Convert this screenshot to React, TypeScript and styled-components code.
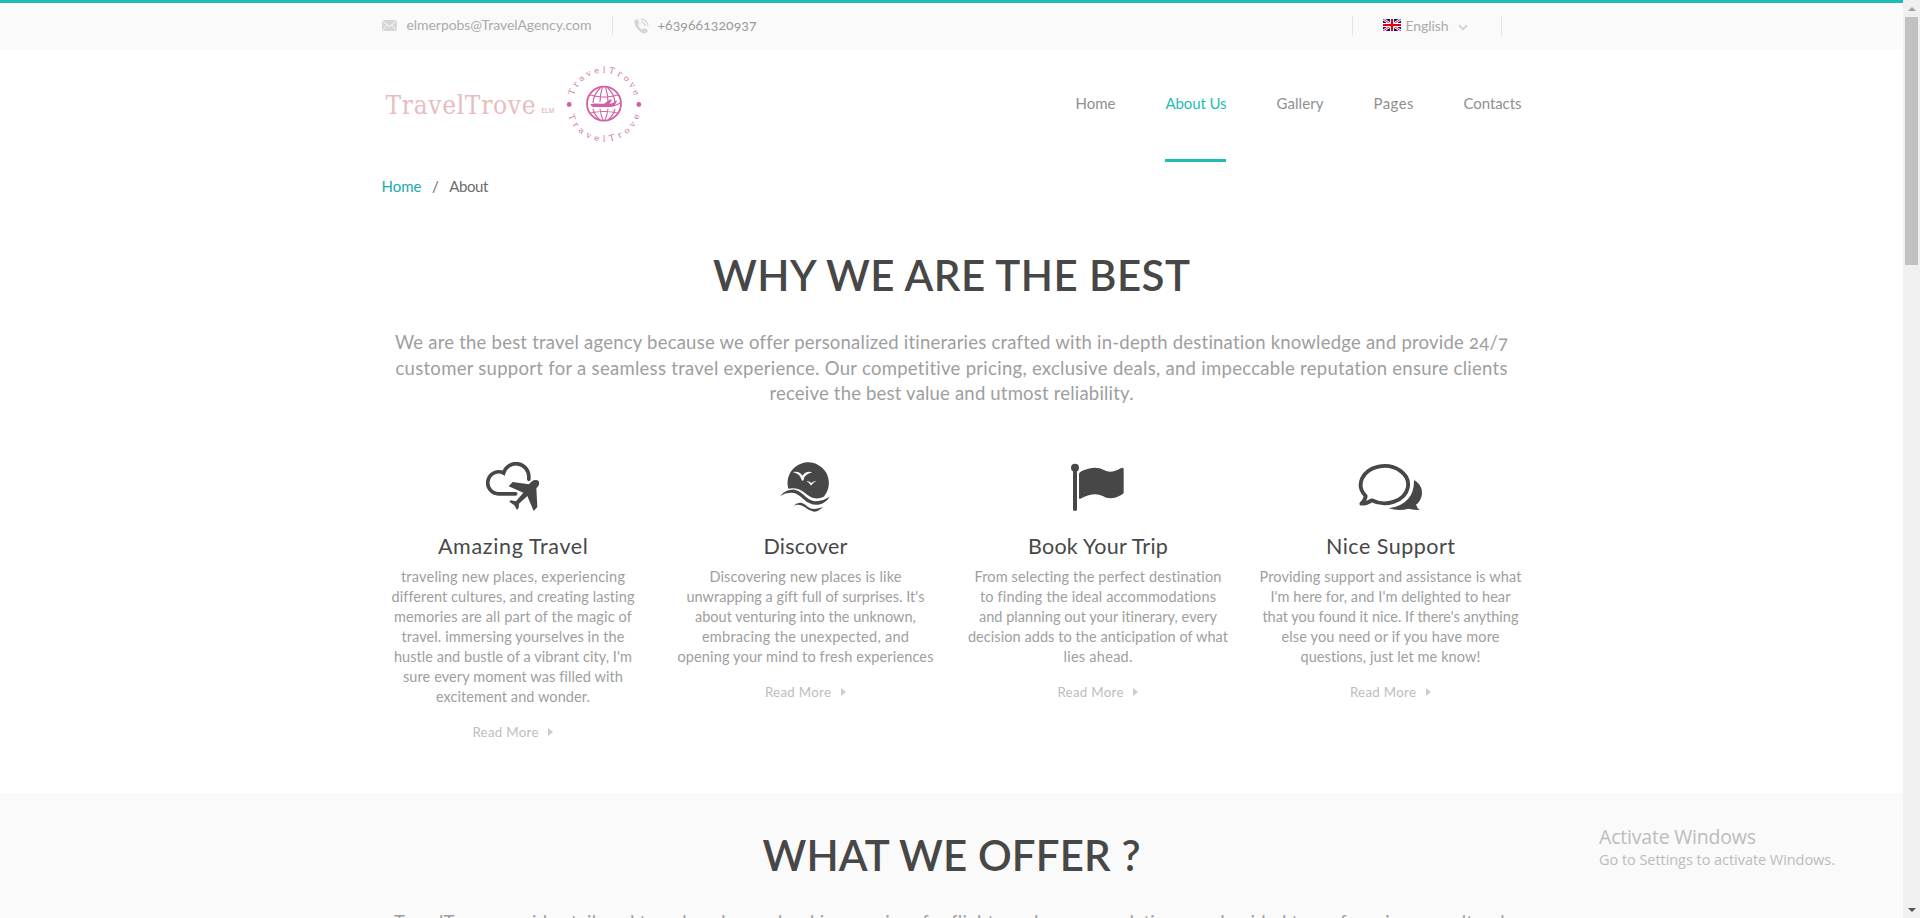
import React, { useLayoutEffect, useRef, useState } from "react";
import styled, { createGlobalStyle } from "styled-components";

const GlobalStyle = createGlobalStyle`
  html, body { margin: 0; padding: 0; overflow: hidden; background: #fff; }
  *, *::before, *::after { box-sizing: border-box; }
  body { font-family: Lato, "Open Sans", sans-serif; color: #999; }
  a { color: inherit; text-decoration: none; }
  h1, h2, h3, p { margin: 0; font-weight: 400; }
`;

const Window = styled.div`
  display: flex;
  width: 1920px;
  height: 918px;
  overflow: hidden;
`;
const Page = styled.div`
  position: relative;
  width: 1903px;
  height: 918px;
  overflow: hidden;
  background: #fff;
  border-top: 3px solid #1fbcb6;
`;
const Container = styled.div`
  width: 1140px;
  margin: 0 auto;
`;

/* A single line of text tracked so that it spans a given width. */
const LineText = styled.span`
  display: inline-block;
  white-space: nowrap;
  font-feature-settings: "onum", "liga" 0;
`;
function Line({ width, children }: { width: number; children: string }) {
  const ref = useRef<HTMLSpanElement>(null);
  const [spacing, setSpacing] = useState(0);
  useLayoutEffect(() => {
    if (ref.current) {
      const natural = ref.current.getBoundingClientRect().width;
      setSpacing((width - natural) / (children.length - 1));
    }
  }, [width, children]);
  return (
    <LineText ref={ref} style={{ letterSpacing: spacing, marginRight: -spacing }}>
      {children}
    </LineText>
  );
}

const TopBar = styled.div`
  height: 46px;
  background: #fafafa;
  font-size: 14px;
  line-height: 20px;
`;
const TopRow = styled(Container)`
  display: flex;
  justify-content: space-between;
  padding-top: 13px;
`;
const TopGroup = styled.div`
  display: flex;
  align-items: flex-start;
  height: 20px;
`;
const Divider = styled.i`
  width: 1px;
  height: 20px;
  background: #e4e4e4;
`;
const Mail = styled.a`
  display: flex;
  align-items: center;
  gap: 10px;
  margin: -1px 20px 0 0;
  color: #aaa;
`;
const Phone = styled.a`
  display: flex;
  align-items: center;
  gap: 9px;
  margin: -1px 0 0 21px;
  color: #999;
  svg { margin-top: 2px; }
`;
const Language = styled.div`
  display: flex;
  align-items: center;
  margin: 0 33px 0 30px;
  color: #aaa;
  svg:first-child { margin: -3px 5px 0 0; }
  svg:last-child { margin: 2px 0 0 9px; }
`;
const LanguageGroup = styled(TopGroup)`
  margin-right: 20px;
`;

const Header = styled(Container)`
  display: flex;
  justify-content: space-between;
  height: 113px;
`;
const Logo = styled.a`
  display: flex;
  padding: 15px 0 0 4px;
`;
const LogoName = styled.span`
  font-family: "DejaVu Serif Condensed", "DejaVu Serif", serif;
  font-stretch: condensed;
  font-size: 26px;
  line-height: 30px;
  margin-top: 26px;
  color: #e8bdbd;
`;
const LogoTag = styled.span`
  font: 600 6.5px/8px "Open Sans", sans-serif;
  margin: 43px 0 0 6px;
  color: #e3b6b8;
`;
const Emblem = styled.svg`
  margin: 0 0 0 9px;
`;
const Nav = styled.nav`
  display: flex;
  gap: 50px;
  font-size: 15px;
  line-height: 20px;
`;
const NavLink = styled.a<{ $active?: boolean }>`
  height: 113px;
  padding-top: 44px;
  color: ${(p) => (p.$active ? "#1fbcb6" : "#909090")};
  border-bottom: 3px solid ${(p) => (p.$active ? "#1fbcb6" : "transparent")};
`;

const Main = styled(Container)`
  height: 631px;
  padding-top: 14px;
`;
const Crumbs = styled.div`
  display: flex;
  gap: 10.5px;
  font-size: 15px;
  line-height: 20px;
  color: #6c6c6c;
`;
const CrumbLink = styled.a`
  color: #22a9ad;
`;
const Heading = styled.h1`
  font-size: 42px;
  font-weight: 600;
  line-height: 46px;
  color: #474747;
  text-align: center;
`;
const MainHeading = styled(Heading)`
  margin-top: 56px;
`;
const Lead = styled.p`
  display: flex;
  flex-direction: column;
  align-items: center;
  margin-top: 32px;
  font-size: 18.5px;
  line-height: 25.7px;
  color: #9e9e9e;
`;
const Features = styled.div`
  display: grid;
  grid-template-columns: repeat(4, 262.5px);
  column-gap: 30px;
  margin: 55px 0 0 0.2px;
`;
const Feature = styled.article`
  display: flex;
  flex-direction: column;
  align-items: center;
`;
const FeatureIcon = styled.svg`
  height: 50px;
  fill: #474747;
`;
const FeatureTitle = styled.h3`
  margin-top: 22px;
  font-size: 21.5px;
  line-height: 25px;
  color: #474747;
`;
const FeatureText = styled.p`
  display: flex;
  flex-direction: column;
  align-items: center;
  margin-top: 8px;
  font-size: 14.5px;
  line-height: 20px;
  color: #9e9e9e;
`;
const ReadMore = styled.a`
  display: flex;
  align-items: center;
  gap: 10px;
  margin-top: 15px;
  font-size: 13.3px;
  line-height: 20px;
  color: #bdbdbd;
`;
const Caret = styled.i`
  border: solid transparent;
  border-width: 4px 0 4px 5px;
  border-left-color: #c9ccd4;
`;

const Offer = styled.section`
  height: 125px;
  padding-top: 39px;
  background: #fafafa;
`;

const Watermark = styled.div`
  position: absolute;
  left: 1599px;
  top: 821px;
  font-family: "Open Sans", sans-serif;
  color: #bcbcbc;
`;
const WatermarkTitle = styled.div`
  font-size: 19.5px;
  line-height: 26px;
`;
const WatermarkText = styled.div`
  margin-top: 1px;
  font-size: 14.5px;
  line-height: 18px;
`;

const Scrollbar = styled.div`
  display: flex;
  flex-direction: column;
  align-items: center;
  justify-content: space-between;
  width: 17px;
  height: 918px;
  padding: 7px 0 6px;
  background: #f0f0f0;
`;
const ScrollTop = styled.div`
  display: flex;
  flex-direction: column;
  align-items: center;
  gap: 6px;
`;
const Thumb = styled.div`
  width: 13px;
  height: 248px;
  background: #c1c1c1;
`;
const Arrow = styled.i<{ $down?: boolean }>`
  border: solid transparent;
  border-width: ${(p) => (p.$down ? "4px 4px 0" : "0 4px 4px")};
  border-top-color: ${(p) => (p.$down ? "#505050" : "transparent")};
  border-bottom-color: ${(p) => (p.$down ? "transparent" : "#a3a3a3")};
`;

const MailIcon = () => (
  <svg width="15" height="11" viewBox="0 0 15 11">
    <rect width="15" height="11" rx="1" fill="#d6d6d6" />
    <path d="M0 .6 7.5 6.6 15 .6M0 10.6 5.3 5M15 10.6 9.7 5" fill="none" stroke="#fafafa" strokeWidth="1" />
  </svg>
);
const PhoneIcon = () => (
  <svg width="15" height="16" viewBox="0 0 46 48">
    <path d="M2 7Q0 12 3 20Q11 39 27 46Q34 49 39 45L42 40Q43 37 40 35L32 31Q30 30 27 34Q25 35 22 33Q15 27 13 20Q13 18 15 16Q17 14 16 12L11 4Q9 1 6 3Z" fill="#d6d6d6" />
    <path d="M21 3Q40 4 43 25M21 12Q33 13 35 25" fill="none" stroke="#d6d6d6" strokeWidth="4" />
  </svg>
);
const UkFlag = () => (
  <svg width="18" height="12" viewBox="0 0 18 12">
    <path fill="#10107a" d="M0 0h18v12H0z" />
    <path d="m0 0 18 12M18 0 0 12" stroke="#fff" strokeWidth="2.6" />
    <path d="m0 0 18 12M18 0 0 12" stroke="#e2303c" strokeWidth="1" />
    <path d="M9 0v12M0 6h18" stroke="#fff" strokeWidth="4" />
    <path d="M9 0v12M0 6h18" stroke="#e60012" strokeWidth="2.2" />
  </svg>
);
const Chevron = () => (
  <svg width="10" height="7" viewBox="0 0 10 7">
    <path d="m1 1.2 4 4 4-4" fill="none" stroke="#d2d2d2" strokeWidth="2" />
  </svg>
);

const LogoEmblem = () => (
  <Emblem width="80" height="80" viewBox="-40 -40 80 80">
    <defs>
      <path id="ringTop" d="M-31.5 0A31.5 31.5 0 0 1 31.5 0" />
      <path id="ringBottom" d="M-37.5 0A37.5 37.5 0 0 0 37.5 0" />
    </defs>
    <g fill="#cf72ab" fontFamily="DejaVu Serif, serif" fontSize="8.4">
      <text textLength="82" lengthAdjust="spacing">
        <textPath href="#ringTop" startOffset="8.5" textLength="82">TravelTrove</textPath>
      </text>
      <text textLength="94" lengthAdjust="spacing">
        <textPath href="#ringBottom" startOffset="12" textLength="94">TravelTrove</textPath>
      </text>
    </g>
    <g fill="#d45fa4">
      <circle cx="-34.8" cy="0.5" r="2.4" />
      <circle cx="34.8" cy="0.5" r="2.4" />
    </g>
    <g fill="none" stroke="#d45fa4" strokeWidth="1.1">
      <circle cy="-.3" r="17" strokeWidth="1.8" />
      <path d="M-3-17Q-11-9-11-1M3-17Q11-9 11-1M-1.5-17Q-4-9-4-2M1.5-17Q4-9 4-2M-14-9Q0-5 14-9M-11 5Q-9 12-4 16M11 5Q9 12 4 16M-4 5Q-3 12-1 16M4 5Q3 12 1 16M-14 9Q0 6 14 9" />
      <path d="M6 2Q12 2 16-1" />
    </g>
    <path d="M-14 .6L-10-.4L0-.2L6-4.5L8-4.2L5.5-.2L9-1L12-3.6L13-3.3L11 1Q9 3 4 3L-11 3Q-13 2-14 .6Z" fill="#d45fa4" />
  </Emblem>
);

const CloudPlane = () => (
  <FeatureIcon width="53" viewBox="320 36 159 150">
    <path d="M448.500 88V80A38.500 38.500 0 0 0 373 69A33 33 0 1 0 358 131.500H409" fill="none" stroke="#474747" strokeWidth="11" strokeLinecap="round" />
    <path d="M448 103L458 94Q464 89 471 90Q481 91 480 101Q479 107 471 115L474 171L463 183L444 138L419 161L418 173L413 180L405 166L390 155L394 151L410 154L432 128L388 109L400 96Z" />
  </FeatureIcon>
);
const SunWaves = () => (
  <FeatureIcon width="50" viewBox="346 37 150 150">
    <path d="M371 117A62 62 0 1 1 477 141Q463 149 446 145Q436 142 420 129Q398 112 371 117Z" />
    <path d="M345 140Q365 118 390 120Q405 123 424 142Q440 157 461 154Q478 152 495 141Q484 160 461 165Q437 168 416 148Q400 133 388 130Q366 126 345 140Z" />
    <path d="M387 168Q398 157 412 160Q420 162 431 173Q445 184 474 172Q462 186 448 186Q434 184 421 173Q406 161 387 168Z" />
    <path d="M384 67Q403 63 411 75Q414 79 415 76Q425 63 443 68Q429 71 421 80Q417 85 417 92L412 93Q407 72 384 67Z" fill="#fff" />
    <path d="M425 95Q434 94 438 99H441Q446 93 456 95Q446 97 440 107H438Q434 98 425 95Z" fill="#fff" />
  </FeatureIcon>
);
const Banner = () => (
  <FeatureIcon width="53" viewBox="366 36 159 150">
    <circle cx="378" cy="53" r="12" />
    <rect x="372" y="55" width="12" height="127" rx="3" />
    <path d="M390 71Q391 68 397 64Q437 44 465 60Q485 73 515 55Q524 51 524 58V128Q523 131 518 134Q485 153 461 138Q435 124 397 145Q390 149 390 143Z" />
  </FeatureIcon>
);
const Chat = () => (
  <FeatureIcon width="66" viewBox="338 36 198 150">
    <path d="M366 138A71 56 0 1 1 384 151Q370 161 353 161Q365 151 366 138Z" fill="none" stroke="#474747" strokeWidth="11.5" strokeLinejoin="round" transform="translate(-2 0)" />
    <path d="M509 90Q534 103 533 131Q531 152 515 164Q519 175 526 180Q508 180 492 176Q465 184 433 175Q473 170 493 145Q510 124 509 90Z" />
  </FeatureIcon>
);

type Row = [string, number];
const features: { icon: React.ReactNode; title: Row; lines: Row[] }[] = [
  {
    icon: <CloudPlane />,
    title: ["Amazing Travel", 150],
    lines: [
      ["traveling new places, experiencing", 224],
      ["different cultures, and creating lasting", 243],
      ["memories are all part of the magic of", 238],
      ["travel. immersing yourselves in the", 223],
      ["hustle and bustle of a vibrant city, I'm", 238],
      ["sure every moment was filled with", 220],
      ["excitement and wonder.", 154],
    ],
  },
  {
    icon: <SunWaves />,
    title: ["Discover", 84],
    lines: [
      ["Discovering new places is like", 192],
      ["unwrapping a gift full of surprises. It's", 238],
      ["about venturing into the unknown,", 221],
      ["embracing the unexpected, and", 207],
      ["opening your mind to fresh experiences", 256],
    ],
  },
  {
    icon: <Banner />,
    title: ["Book Your Trip", 140],
    lines: [
      ["From selecting the perfect destination", 247],
      ["to finding the ideal accommodations", 236],
      ["and planning out your itinerary, every", 238],
      ["decision adds to the anticipation of what", 260],
      ["lies ahead.", 69],
    ],
  },
  {
    icon: <Chat />,
    title: ["Nice Support", 129],
    lines: [
      ["Providing support and assistance is what", 262],
      ["I'm here for, and I'm delighted to hear", 240],
      ["that you found it nice. If there's anything", 256],
      ["else you need or if you have more", 218],
      ["questions, just let me know!", 180],
    ],
  },
];

const nav: Row[] = [
  ["Home", 40],
  ["About Us", 61],
  ["Gallery", 47],
  ["Pages", 40],
  ["Contacts", 58],
];

export default function App() {
  return (
    <Window>
      <GlobalStyle />
      <Page>
        <TopBar>
          <TopRow>
            <TopGroup>
              <Mail href="#">
                <MailIcon />
                <Line width={185}>elmerpobs@TravelAgency.com</Line>
              </Mail>
              <Divider />
              <Phone href="#">
                <PhoneIcon />
                <Line width={99}>+639661320937</Line>
              </Phone>
            </TopGroup>
            <LanguageGroup>
              <Divider />
              <Language>
                <UkFlag />
                <Line width={43}>English</Line>
                <Chevron />
              </Language>
              <Divider />
            </LanguageGroup>
          </TopRow>
        </TopBar>

        <Header as="header">
          <Logo href="#">
            <LogoName><Line width={150}>TravelTrove</Line></LogoName>
            <LogoTag><Line width={13}>ELM</Line></LogoTag>
            <LogoEmblem />
          </Logo>
          <Nav>
            {nav.map(([label, width]) => (
              <NavLink key={label} href="#" $active={label === "About Us"}>
                <Line width={width}>{label}</Line>
              </NavLink>
            ))}
          </Nav>
        </Header>

        <Main as="main">
          <Crumbs>
            <CrumbLink href="#"><Line width={40}>Home</Line></CrumbLink>
            <span>/</span>
            <Line width={39}>About</Line>
          </Crumbs>
          <MainHeading><Line width={477}>WHY WE ARE THE BEST</Line></MainHeading>
          <Lead>
            <Line width={1113}>We are the best travel agency because we offer personalized itineraries crafted with in-depth destination knowledge and provide 24/7</Line>
            <Line width={1112}>customer support for a seamless travel experience. Our competitive pricing, exclusive deals, and impeccable reputation ensure clients</Line>
            <Line width={364}>receive the best value and utmost reliability.</Line>
          </Lead>
          <Features>
            {features.map((f) => (
              <Feature key={f.title[0]}>
                {f.icon}
                <FeatureTitle><Line width={f.title[1]}>{f.title[0]}</Line></FeatureTitle>
                <FeatureText>
                  {f.lines.map(([text, width]) => (
                    <Line key={text} width={width}>{text}</Line>
                  ))}
                </FeatureText>
                <ReadMore href="#">
                  <Line width={66}>Read More</Line>
                  <Caret />
                </ReadMore>
              </Feature>
            ))}
          </Features>
        </Main>

        <Offer>
          <Heading as="h2"><Line width={378}>WHAT WE OFFER ?</Line></Heading>
          <Lead>
            <Line width={1115}>TravelTrove provides tailored travel packages, booking services for flights and accommodations, and guided tours focusing on cultural,</Line>
          </Lead>
        </Offer>

        <Watermark>
          <WatermarkTitle><Line width={157}>Activate Windows</Line></WatermarkTitle>
          <WatermarkText><Line width={236}>Go to Settings to activate Windows.</Line></WatermarkText>
        </Watermark>
      </Page>
      <Scrollbar>
        <ScrollTop>
          <Arrow />
          <Thumb />
        </ScrollTop>
        <Arrow $down />
      </Scrollbar>
    </Window>
  );
}
